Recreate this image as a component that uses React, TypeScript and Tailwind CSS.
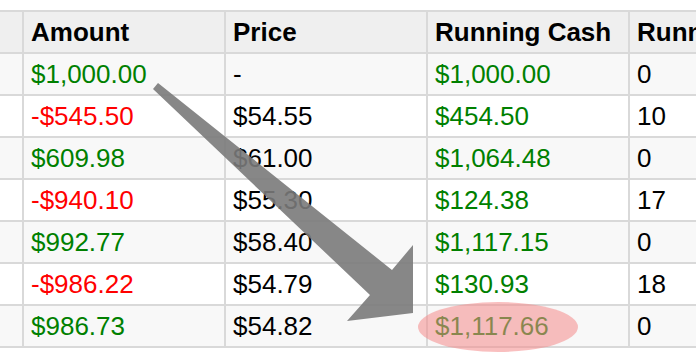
const ROWS = [
  { amount: '$1,000.00', price: '-', cash: '$1,000.00', shares: '0' },
  { amount: '-$545.50', price: '$54.55', cash: '$454.50', shares: '10' },
  { amount: '$609.98', price: '$61.00', cash: '$1,064.48', shares: '0' },
  { amount: '-$940.10', price: '$55.30', cash: '$124.38', shares: '17' },
  { amount: '$992.77', price: '$58.40', cash: '$1,117.15', shares: '0' },
  { amount: '-$986.22', price: '$54.79', cash: '$130.93', shares: '18' },
  { amount: '$986.73', price: '$54.82', cash: '$1,117.66', shares: '0' },
];

const HEADERS = ['Amount', 'Price', 'Running Cash', 'Running Shares'];

export default function App() {
  return (
    <div
      className="relative w-[696px] h-[356px] overflow-hidden bg-white pt-[10px]"
      style={{ fontFamily: '"Liberation Sans", Arial, sans-serif' }}
    >
      {/* Sheet grid — gaps show the cell borders */}
      <div className="grid grid-cols-[22px_200px_200px_200px_1fr] gap-[2px] bg-[#d9d9d9] py-[2px] text-[26px] leading-none">
        <div className="h-[40px] bg-[#efefef]" />
        {HEADERS.map(h => (
          <div key={h} className="h-[40px] bg-[#efefef] pl-[7px] flex items-center font-bold text-black whitespace-nowrap overflow-hidden">
            {h}
          </div>
        ))}

        {ROWS.map((r, i) => {
          const bg = i % 2 === 0 ? 'bg-[#f8f8f8]' : 'bg-white';
          const neg = r.amount.startsWith('-');
          return [
            <div key={`g${i}`} className={`h-[40px] ${bg}`} />,
            <div key={`a${i}`} className={`h-[40px] ${bg} pl-[7px] flex items-center ${neg ? 'text-[#ff0000]' : 'text-[#008000]'}`}>
              {r.amount}
            </div>,
            <div key={`p${i}`} className={`h-[40px] ${bg} pl-[7px] flex items-center text-black`}>
              {r.price}
            </div>,
            <div key={`c${i}`} className={`h-[40px] ${bg} pl-[7px] flex items-center text-[#008000]`}>
              {r.cash}
            </div>,
            <div key={`s${i}`} className={`h-[40px] ${bg} pl-[7px] flex items-center text-black`}>
              {r.shares}
            </div>,
          ];
        })}
      </div>

      {/* Annotation overlay: arrow + highlight */}
      <svg className="absolute inset-0 pointer-events-none" width="696" height="356" viewBox="0 0 696 356">
        <polygon
          points="153,89 158,83 392,270 413,245 413,313 347,321 370,295"
          fill="#7a7a7a"
          fillOpacity="0.9"
        />
        <ellipse cx="498" cy="327" rx="80" ry="25" fill="rgb(245,140,140)" fillOpacity="0.56" />
      </svg>
    </div>
  );
}
